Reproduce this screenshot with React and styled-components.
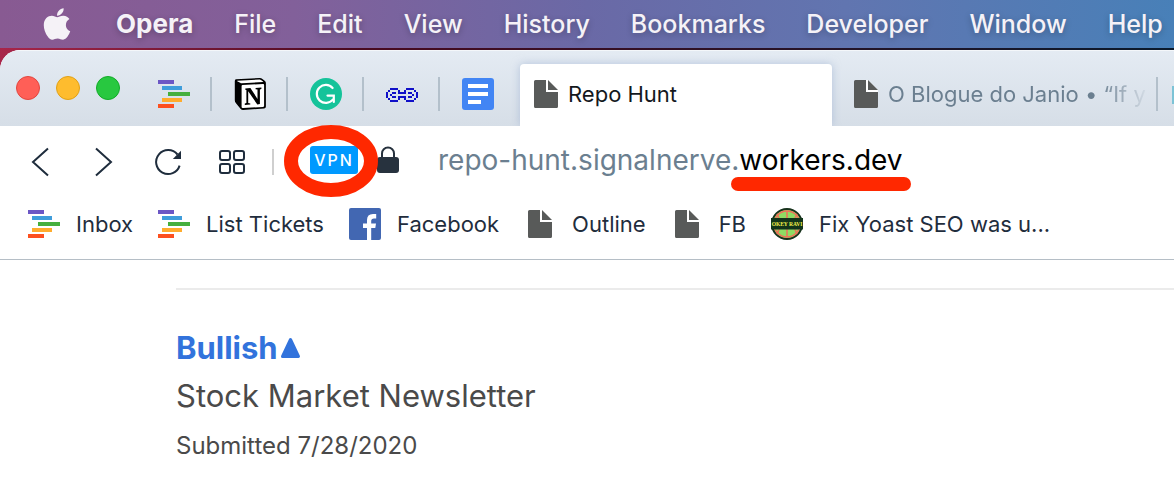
import React from "react";
import styled, { createGlobalStyle } from "styled-components";
import { FaApple } from "react-icons/fa";

const menus = ["File", "Edit", "View", "History", "Bookmarks", "Developer", "Window", "Help"];

const StripesIcon = () => (
  <svg width="32" height="32" viewBox="0 0 32 32" aria-hidden="true">
    <rect x="0" y="2" width="16" height="4" fill="#6b57c5" />
    <rect x="4" y="8" width="20" height="4" fill="#3f9ddb" />
    <rect x="10" y="14" width="22" height="4" fill="#45af3e" />
    <rect x="4" y="20" width="20" height="4" fill="#ffac2d" />
    <rect x="0" y="26" width="16" height="4" fill="#fd501f" />
  </svg>
);

const NotionIcon = () => (
  <svg width="32" height="32" viewBox="0 0 32 32" aria-hidden="true">
    <path d="M2 1.2L25.5 0.1Q27.2 0 28.4 0.9L31 3Q31.9 3.8 31.9 5V28.6Q31.9 30.4 30 30.6L9.2 31.9Q7.6 32 6.7 30.9L1.8 25Q0.8 23.7 0.8 22.2V3Q0.8 1.3 2 1.2Z" fill="#000" />
    <path d="M3.4 2.7L25.4 1.5Q26.3 1.4 27 2L29 3.4Q29.6 4 28.7 4.1L7.8 5.3Q6.9 5.3 6.2 4.7L3.7 3.6Q2.6 2.8 3.4 2.7Z" fill="#fff" />
    <path d="M8.5 7.1L29.2 5.9Q30.1 5.9 30.1 6.8V27.8Q30.1 28.8 29.1 28.9L8.9 30Q7.6 30.1 7.6 28.9V8.2Q7.6 7.2 8.5 7.1Z" fill="#fff" />
    <path d="M11.3 10.4L16.4 10.1L23.5 20.9V11.5L21.6 11.2V9.9L27.4 9.5V10.9L25.9 11.4V26L23.3 26.5L14.2 13.3V25L16.3 25.4V26.6L10.8 26.9V25.6L12.4 25V11.9L11.3 11.7Z" fill="#000" />
  </svg>
);

const GrammarlyIcon = () => (
  <svg width="32" height="32" viewBox="0 0 32 32" aria-hidden="true">
    <circle cx="16" cy="16" r="16" fill="#15c39a" />
    <path d="M22.6 10A9 9 0 1 0 22.8 21.6" fill="none" stroke="#fff" strokeWidth="2.2" strokeLinecap="round" />
    <path d="M17.5 17.6H23.8V24" fill="none" stroke="#fff" strokeWidth="2.2" strokeLinecap="round" />
  </svg>
);

const chainPixels = [
  "..####....####..",
  ".#....#..#....#.",
  "#..##.####.##..#",
  "#.#..........#.#",
  "#..##.####.##..#",
  ".#....#..#....#.",
  "..####....####..",
];

const ChainIcon = () => (
  <svg width="32" height="32" viewBox="0 0 32 32" aria-hidden="true">
    {chainPixels.map((row, y) =>
      row.split("").map((cell, x) =>
        cell === "#" ? <rect key={`${x}-${y}`} x={x * 2} y={10 + y * 2} width="2" height="2" fill="#1010c8" /> : null
      )
    )}
  </svg>
);

const DocsIcon = () => (
  <svg width="32" height="32" viewBox="0 0 32 32" aria-hidden="true">
    <rect width="32" height="32" rx="3" fill="#4285f4" />
    <path d="M6 8H26M6 16H26M6 24H19" stroke="#fff" strokeWidth="4" />
  </svg>
);

const PageIcon = () => (
  <svg width="24" height="28" viewBox="0 0 24 28" aria-hidden="true">
    <path d="M12 0H14L24 10V12H12Z" fill="#fff" />
    <path d="M2 0H12V12H24V26.5Q24 28 22.5 28H1.5Q0 28 0 26.5V1.5Q0 0 1.5 0Z" fill="#585a59" />
    <path d="M14 0L24 10H14Z" fill="#585a59" />
  </svg>
);

const FacebookIcon = () => (
  <svg width="32" height="32" viewBox="0 0 32 32" aria-hidden="true">
    <rect width="32" height="32" rx="2" fill="#4267b2" />
    <path d="M18 32V20H14V15.4H18V12Q18 6 24 6H27.2V10.4H25Q22.2 10.4 22.2 13V15.4H27L26.3 20H22.2V32Z" fill="#fff" />
  </svg>
);

const HockeyIcon = () => (
  <svg width="32" height="32" viewBox="0 0 64 64" aria-hidden="true">
    <circle cx="32" cy="32" r="30" fill="#8fdc63" stroke="#17321c" strokeWidth="4" />
    <circle cx="32" cy="32" r="26" fill="none" stroke="#f0705a" strokeWidth="3" />
    <path d="M32 6V58M12 12Q24 32 12 52M52 12Q40 32 52 52" fill="none" stroke="#f0705a" strokeWidth="3" />
    <rect x="0" y="20" width="64" height="23" fill="#12351a" />
    <text x="32" y="35" fontSize="11" fontWeight="700" fontFamily="'Liberation Serif', serif" textAnchor="middle" fill="#f2ef4a">OKEY RAVI</text>
  </svg>
);

const pinned = [
  { name: "Tickets", Icon: StripesIcon },
  { name: "Notion", Icon: NotionIcon },
  { name: "Grammarly", Icon: GrammarlyIcon },
  { name: "Links", Icon: ChainIcon },
  { name: "Docs", Icon: DocsIcon },
];

const bookmarks = [
  { name: "Inbox", Icon: StripesIcon },
  { name: "List Tickets", Icon: StripesIcon },
  { name: "Facebook", Icon: FacebookIcon },
  { name: "Outline", Icon: PageIcon },
  { name: "FB", Icon: PageIcon },
  { name: "Fix Yoast SEO was u...", Icon: HockeyIcon },
];

const App = () => {
  return (
    <>
      <GlobalStyle />
      <Desktop>
        <Menubar>
          <Menuitem aria-label="Apple">
            <FaApple size={36} />
          </Menuitem>
          <Menuitem $active>Opera</Menuitem>
          {menus.map((menu) => (
            <Menuitem key={menu}>{menu}</Menuitem>
          ))}
        </Menubar>
        <Browser>
          <Tabstrip>
            <Lights>
              <Light aria-label="Close" $color="#ff5f57" $edge="#e2463f" />
              <Light aria-label="Minimize" $color="#febc2e" $edge="#e1a116" />
              <Light aria-label="Zoom" $color="#28c840" $edge="#12ac28" />
            </Lights>
            {pinned.map(({ name, Icon }) => (
              <Pinnedtab key={name} aria-label={name}>
                <Icon />
              </Pinnedtab>
            ))}
            <Activetab>
              <PageIcon />
              Repo Hunt
            </Activetab>
            <Tab>
              <PageIcon />
              <Tabtitle>O Blogue do Janio • “If y</Tabtitle>
            </Tab>
            <Nexttab aria-label="Next tab">
              <Swatch />
            </Nexttab>
          </Tabstrip>
          <Toolbar>
            <Toolbutton aria-label="Back">
              <svg width="32" height="32" viewBox="0 0 32 32">
                <path d="M24 2.5L9 16L24 29.5" />
              </svg>
            </Toolbutton>
            <Toolbutton aria-label="Forward">
              <svg width="32" height="32" viewBox="0 0 32 32">
                <path d="M8 2.5L23 16L8 29.5" />
              </svg>
            </Toolbutton>
            <Toolbutton aria-label="Reload">
              <svg width="32" height="32" viewBox="0 0 32 32">
                <path d="M25.5 8.5A12 12 0 1 0 27.6 19.6" />
                <path d="M29 4.8V13H20.8Z" fill="#1f2d3d" stroke="none" />
              </svg>
            </Toolbutton>
            <Toolbutton aria-label="Speed dial">
              <svg width="32" height="32" viewBox="0 0 32 32">
                <rect x="4" y="5" width="10" height="9" rx="2" />
                <rect x="18" y="5" width="10" height="9" rx="2" />
                <rect x="4" y="18" width="10" height="9" rx="2" />
                <rect x="18" y="18" width="10" height="9" rx="2" />
              </svg>
            </Toolbutton>
            <Divider />
            <Addressbar>
              <Vpn>
                VPN
                <Ring width="94" height="72" viewBox="0 0 94 72" aria-hidden="true">
                  <ellipse cx="47" cy="36" rx="40" ry="29" />
                </Ring>
              </Vpn>
              <Lock width="24" height="28" viewBox="0 0 24 28" aria-hidden="true">
                <path d="M6 12V7.5A6 6 0 0 1 18 7.5V12" fill="none" stroke="#27323e" strokeWidth="2" />
                <rect x="1" y="11" width="22" height="16" rx="3" fill="#27323e" />
              </Lock>
              <Address role="textbox" aria-label="Address" tabIndex={0}>
                repo-hunt.signalnerve.<Domain>workers.dev</Domain>
              </Address>
            </Addressbar>
          </Toolbar>
          <Bookmarkbar>
            {bookmarks.map(({ name, Icon }) => (
              <Bookmark key={name} href="#">
                <Favicon>
                  <Icon />
                </Favicon>
                {name}
              </Bookmark>
            ))}
          </Bookmarkbar>
          <Page>
            <Post>
              <Posttitle href="#">
                Bullish
                <svg width="24" height="24" viewBox="0 0 24 24" aria-hidden="true">
                  <path d="M12.5 3.5L20.5 20.5H4.5Z" fill="#3273dc" stroke="#3273dc" strokeWidth="3" strokeLinejoin="round" />
                </svg>
              </Posttitle>
              <Postinfo>Stock Market Newsletter</Postinfo>
              <Postdate>Submitted 7/28/2020</Postdate>
            </Post>
          </Page>
        </Browser>
      </Desktop>
    </>
  );
};
export default App;

const GlobalStyle = createGlobalStyle`
  * {
    box-sizing: border-box;
  }
  body {
    margin: 0;
    overflow: hidden;
    background-color: #ffffff;
    font-family: Inter, "Liberation Sans", sans-serif;
  }
  button {
    border: none;
    padding: 0;
    background: none;
    font-family: inherit;
  }
  a {
    text-decoration: none;
  }
  svg {
    display: block;
    flex-shrink: 0;
  }
`;

const Desktop = styled.div`
  min-height: 100vh;
  display: flex;
  flex-direction: column;
  background: linear-gradient(to right, #a8264a, #4a0a20 30%, #0a1a2c);
`;

const Menubar = styled.nav`
  height: 48px;
  padding-left: 39px;
  display: flex;
  align-items: center;
  gap: 41px;
  overflow: hidden;
  background: linear-gradient(to right, #885a92, #82609a 25%, #6a69a6 50%, #6175b0 72%, #4880b8);
`;

const Menuitem = styled.button`
  flex-shrink: 0;
  color: #f5f2f7;
  font-size: ${(props) => (props.$active ? 26 : 25)}px;
  font-weight: ${(props) => (props.$active ? 700 : 500)};
  line-height: 32px;
  text-shadow: 0 2px 6px rgba(0, 0, 0, 0.25);
`;

const Browser = styled.div`
  flex: 1;
  margin-top: 2px;
  border-radius: 20px 0 0 0;
  overflow: hidden;
  background-color: #ffffff;
`;

const Tabstrip = styled.div`
  height: 76px;
  display: flex;
  align-items: flex-end;
  overflow: hidden;
  box-shadow: inset 0 1px 0 #f4f7fa;
  background: linear-gradient(to bottom, #e4ebf3, #d6dee7);
`;

const Lights = styled.div`
  width: 136px;
  flex-shrink: 0;
  align-self: center;
  padding-left: 16px;
  display: flex;
  gap: 16px;
`;

const Light = styled.button`
  width: 24px;
  height: 24px;
  border-radius: 50%;
  border: 1px solid ${(props) => props.$edge};
  background-color: ${(props) => props.$color};
`;

const Pinnedtab = styled.button`
  width: 76px;
  height: 62px;
  flex-shrink: 0;
  display: flex;
  align-items: center;
  justify-content: space-between;
  padding: 0 0 2px 22px;

  &:not(:nth-of-type(5))::after {
    content: "";
    width: 2px;
    height: 34px;
    background-color: #b3c0cb;
  }
`;

const Activetab = styled.button`
  width: 312px;
  height: 62px;
  flex-shrink: 0;
  margin-left: 4px;
  padding: 0 14px 2px;
  display: flex;
  align-items: center;
  gap: 10px;
  border-radius: 4px 4px 0 0;
  background-color: #ffffff;
  box-shadow: 0 0 8px rgba(150, 170, 205, 0.6);
  color: #14181d;
  font-size: 22px;
`;

const Tab = styled.button`
  width: 324px;
  height: 62px;
  flex-shrink: 0;
  padding: 0 0 2px 22px;
  display: flex;
  align-items: center;
  gap: 10px;
  color: #6b7f90;
  font-size: 22px;

  &::after {
    content: "";
    width: 2px;
    height: 34px;
    flex-shrink: 0;
    background-color: #b3c0cb;
  }
`;

const Tabtitle = styled.span`
  flex: 1;
  text-align: left;
  white-space: nowrap;
  mask-image: linear-gradient(to right, #000 210px, transparent 262px);
`;

const Nexttab = styled.button`
  height: 62px;
  padding-left: 16px;
  display: flex;
  align-items: center;
`;

const Swatch = styled.span`
  width: 20px;
  height: 18px;
  background-color: #7cc3d6;
`;

const Toolbar = styled.div`
  height: 72px;
  padding-left: 8px;
  display: flex;
  align-items: center;
`;

const Toolbutton = styled.button`
  width: 64px;
  height: 64px;
  flex-shrink: 0;
  display: flex;
  align-items: center;
  justify-content: center;
  fill: none;
  stroke: #1f2d3d;
  stroke-width: 2;
`;

const Divider = styled.div`
  width: 2px;
  height: 26px;
  margin-left: 8px;
  background-color: #cfcfcf;
`;

const Addressbar = styled.div`
  flex: 1;
  padding: 0 0 4px 36px;
  display: flex;
  align-items: center;
`;

const Vpn = styled.button`
  width: 48px;
  height: 28px;
  position: relative;
  border-radius: 3px;
  background-color: #0099ff;
  color: #ffffff;
  font-size: 16px;
  font-weight: 500;
  letter-spacing: 2px;
  line-height: 28px;
`;

const Ring = styled.svg`
  position: absolute;
  top: -21px;
  left: -26px;
  z-index: 1;
  fill: none;
  stroke: #ff2800;
  stroke-width: 14;
`;

const Lock = styled.svg`
  margin-left: 18px;
`;

const Address = styled.div`
  margin-left: 38px;
  color: #6b7f90;
  font-size: 28px;
  line-height: 36px;
  white-space: nowrap;
`;

const Domain = styled.span`
  position: relative;
  color: #000000;

  &::after {
    content: "";
    position: absolute;
    left: -8px;
    right: -8px;
    bottom: -14px;
    height: 14px;
    border-radius: 7px;
    background-color: #ff2800;
  }
`;

const Bookmarkbar = styled.nav`
  padding: 10px 28px 19px;
  display: flex;
  gap: 25px;
  border-bottom: 1px solid #b5bec6;
`;

const Bookmark = styled.a`
  display: flex;
  align-items: center;
  gap: 16px;
  flex-shrink: 0;
  color: #1f2d3d;
  font-size: 22px;
  line-height: 32px;
`;

const Favicon = styled.span`
  width: 32px;
  height: 32px;
  display: flex;
  align-items: center;
  justify-content: center;
`;

const Page = styled.main`
  padding: 28px 0 0 176px;
`;

const Post = styled.article`
  padding-top: 34px;
  border-top: 2px solid #ebebeb;
  color: #4a4a4a;
`;

const Posttitle = styled.a`
  display: flex;
  align-items: center;
  color: #3273dc;
  font-size: 31px;
  font-weight: 700;
  line-height: 48px;
`;

const Postinfo = styled.p`
  margin: 0;
  font-size: 31px;
  line-height: 48px;
`;

const Postdate = styled.p`
  margin: 8px 0 0;
  font-size: 24px;
  line-height: 36px;
`;
